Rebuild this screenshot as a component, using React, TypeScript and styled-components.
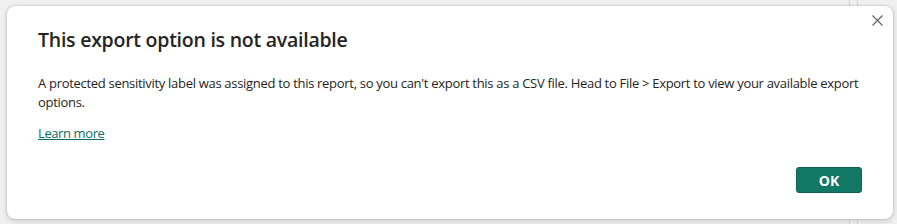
import styled, { createGlobalStyle } from "styled-components";

const GlobalStyle = createGlobalStyle`
  html, body {
    margin: 0;
    padding: 0;
    background: #f0f0f0;
  }
  * {
    box-sizing: border-box;
  }
`;

const Page = styled.div`
  width: 897px;
  height: 224px;
  padding: 6px 4px 5px 7px;
  background-color: #f0f0f0;
  background-image: linear-gradient(#d6d6d6, #d6d6d6),
    linear-gradient(#d6d6d6, #d6d6d6);
  background-size: 1px 224px, 1px 224px;
  background-position: 849px 0, 857px 0;
  background-repeat: no-repeat;
  font-family: "Segoe UI", "Open Sans", "Liberation Sans", sans-serif;
`;

const Dialog = styled.div`
  position: relative;
  height: 100%;
  background: #ffffff;
  border-radius: 8px;
  box-shadow: 0 0 2px rgba(0, 0, 0, 0.28), 0 2px 6px rgba(0, 0, 0, 0.14);
  padding: 20px 31px 0 31px;
  display: flex;
  flex-direction: column;
`;

const CloseButton = styled.button`
  position: absolute;
  top: 3px;
  right: 5px;
  width: 22px;
  height: 22px;
  padding: 0;
  border: none;
  background: transparent;
  display: flex;
  align-items: center;
  justify-content: center;
  cursor: pointer;
`;

const Title = styled.h1`
  margin: 0;
  font-size: 19.5px;
  line-height: 28px;
  font-weight: 600;
  letter-spacing: -0.25px;
  color: #252423;
`;

const Body = styled.p`
  margin: 20px 0 0;
  font-size: 13px;
  line-height: 19px;
  letter-spacing: -0.3px;
  color: #252423;
`;

const LearnMore = styled.a`
  margin-top: 12px;
  align-self: flex-start;
  font-size: 13px;
  line-height: 18px;
  letter-spacing: -0.4px;
  color: #0a6e66;
  text-decoration: underline;
  cursor: pointer;
`;

const Footer = styled.div`
  margin-top: auto;
  display: flex;
  justify-content: flex-end;
  padding-bottom: 26px;
`;

const OkButton = styled.button`
  width: 66px;
  height: 26px;
  background: #117865;
  border: 1px solid #0d6454;
  border-radius: 3px;
  color: #ffffff;
  font-family: inherit;
  font-size: 14px;
  font-weight: 700;
  cursor: pointer;
`;

const App = () => {
  return (
    <>
      <GlobalStyle />
      <Page>
        <Dialog role="dialog">
          <CloseButton aria-label="Close">
            <svg width="11" height="11" viewBox="0 0 11 11">
              <path
                d="M0.5 0.5 L10.5 10.5 M10.5 0.5 L0.5 10.5"
                stroke="#605e5c"
                strokeWidth="1.1"
              />
            </svg>
          </CloseButton>
          <Title>This export option is not available</Title>
          <Body>
            A protected sensitivity label was assigned to this report, so you
            can't export this as a CSV file. Head to File &gt; Export to view
            your available export options.
          </Body>
          <LearnMore>Learn more</LearnMore>
          <Footer>
            <OkButton>OK</OkButton>
          </Footer>
        </Dialog>
      </Page>
    </>
  );
};

export default App;
